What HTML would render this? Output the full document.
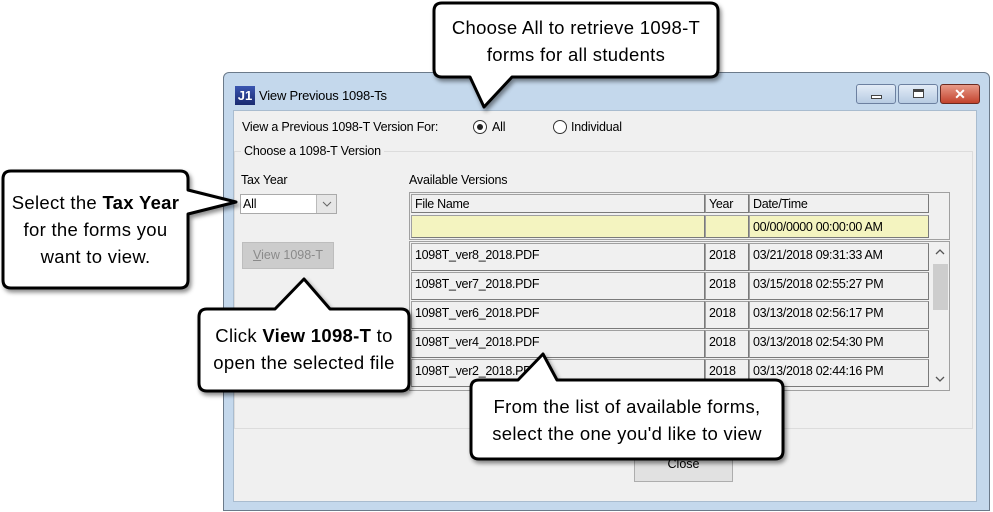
<!DOCTYPE html>
<html><head><meta charset="utf-8"><style>
*{margin:0;padding:0;box-sizing:border-box}
body{width:993px;height:512px;background:#fff;position:relative;overflow:hidden;font-family:"Liberation Sans",sans-serif;font-size:12px;color:#000}
.a{position:absolute}
.win{left:223px;top:72px;width:767px;height:439px;background:#c4d8ec;border:1px solid #6b7a8a;border-radius:6px 6px 0 0}
.client{left:233px;top:110px;width:744px;height:392px;background:#f0f0f0;border:1px solid #a9bccf}
.t{white-space:nowrap;font-size:12.5px;letter-spacing:-0.2px}
.cell{position:absolute;background:#f0f0f0;border:1px solid #a0a0a0;border-right-color:#7a7a7a;border-bottom-color:#7a7a7a;padding:2px 3px;font-size:12.5px;letter-spacing:-0.3px;white-space:nowrap;line-height:14px}
.co{font-family:"Liberation Sans",sans-serif;font-size:18.5px;letter-spacing:0.3px;text-align:center;line-height:27px;color:#000;white-space:nowrap}
</style></head><body>
<div class="a win"></div>
<div class="a" style="left:235px;top:86px;width:20px;height:19px;background:linear-gradient(#3a55b0,#1a2a70);color:#fff;font-weight:bold;font-size:13px;line-height:19px;text-align:center">J1</div>
<div class="a t" style="left:259px;top:88px;font-size:13px">View Previous 1098-Ts</div>
<div class="a" style="left:856px;top:84px;width:40px;height:20px;border:1px solid #6c80a0;border-radius:3px;background:linear-gradient(#e3ecf7,#b7cbe2)"><div class="a" style="left:14px;top:10px;width:11px;height:4px;background:#fff;border:1px solid #444"></div></div>
<div class="a" style="left:898px;top:84px;width:40px;height:20px;border:1px solid #6c80a0;border-radius:3px;background:linear-gradient(#e3ecf7,#b7cbe2)"><div class="a" style="left:14px;top:4px;width:11px;height:9px;background:#fff;border:1px solid #444;border-top-width:3px"></div></div>
<div class="a" style="left:940px;top:84px;width:40px;height:20px;border:1px solid #6b2a20;border-radius:3px;background:linear-gradient(#e89a88,#c2432d);color:#fff;font-weight:bold;font-size:14px;text-align:center;line-height:18px">✕</div>
<div class="a client"></div>
<div class="a t" style="left:242px;top:120px">View a Previous 1098-T Version For:</div>
<div class="a" style="left:473px;top:120px;width:14px;height:14px;border:1px solid #333;border-radius:50%;background:#fff"><div class="a" style="left:3px;top:3px;width:6px;height:6px;border-radius:50%;background:#222"></div></div>
<div class="a t" style="left:492px;top:120px">All</div>
<div class="a" style="left:553px;top:120px;width:14px;height:14px;border:1px solid #333;border-radius:50%;background:#fff"></div>
<div class="a t" style="left:571px;top:120px">Individual</div>
<div class="a" style="left:234px;top:151px;width:739px;height:278px;border:1px solid #dcdcdc"></div>
<div class="a t" style="left:241px;top:144px;background:#f0f0f0;padding:0 3px">Choose a 1098-T Version</div>
<div class="a t" style="left:241px;top:173px">Tax Year</div>
<div class="a" style="left:240px;top:194px;width:97px;height:20px;background:#fff;border:1px solid #aaa"><span class="a t" style="left:2px;top:2px">All</span><div class="a" style="right:0;top:0;width:20px;height:18px;background:#e6e6e6;border-left:1px solid #bbb"><svg class="a" style="left:5px;top:6px" width="10" height="6"><path d="M1 1 L5 5 L9 1" fill="none" stroke="#666" stroke-width="1"/></svg></div></div>
<div class="a" style="left:242px;top:242px;width:92px;height:27px;background:#ccc;border:1px solid #bdbdbd;color:#8a8a8a;text-align:center;line-height:25px;font-size:12.5px"><u>V</u>iew 1098-T</div>
<div class="a t" style="left:409px;top:173px">Available Versions</div>
<div class="a" style="left:409px;top:192px;width:541px;height:48px;border:1px solid #a0a0a0;background:#f0f0f0"></div>
<div class="cell" style="left:411px;top:194px;width:294px;height:19px">File Name</div>
<div class="cell" style="left:705px;top:194px;width:44px;height:19px">Year</div>
<div class="cell" style="left:749px;top:194px;width:180px;height:19px">Date/Time</div>
<div class="cell" style="left:411px;top:215px;width:294px;height:23px;background:#f4f4c0"></div>
<div class="cell" style="left:705px;top:215px;width:44px;height:23px;background:#f4f4c0"></div>
<div class="cell" style="left:749px;top:215px;width:180px;height:23px;background:#f4f4c0;padding-top:4px">00/00/0000 00:00:00 AM</div>
<div class="a" style="left:409px;top:241px;width:541px;height:150px;border:1px solid #a0a0a0;background:#f0f0f0"></div>
<div class="cell" style="left:411px;top:243px;width:294px;height:28px;padding-top:4px">1098T_ver8_2018.PDF</div><div class="cell" style="left:705px;top:243px;width:44px;height:28px;padding-top:4px">2018</div><div class="cell" style="left:749px;top:243px;width:180px;height:28px;padding-top:4px">03/21/2018 09:31:33 AM</div>
<div class="cell" style="left:411px;top:272px;width:294px;height:28px;padding-top:4px">1098T_ver7_2018.PDF</div><div class="cell" style="left:705px;top:272px;width:44px;height:28px;padding-top:4px">2018</div><div class="cell" style="left:749px;top:272px;width:180px;height:28px;padding-top:4px">03/15/2018 02:55:27 PM</div>
<div class="cell" style="left:411px;top:301px;width:294px;height:28px;padding-top:4px">1098T_ver6_2018.PDF</div><div class="cell" style="left:705px;top:301px;width:44px;height:28px;padding-top:4px">2018</div><div class="cell" style="left:749px;top:301px;width:180px;height:28px;padding-top:4px">03/13/2018 02:56:17 PM</div>
<div class="cell" style="left:411px;top:330px;width:294px;height:28px;padding-top:4px">1098T_ver4_2018.PDF</div><div class="cell" style="left:705px;top:330px;width:44px;height:28px;padding-top:4px">2018</div><div class="cell" style="left:749px;top:330px;width:180px;height:28px;padding-top:4px">03/13/2018 02:54:30 PM</div>
<div class="cell" style="left:411px;top:359px;width:294px;height:28px;padding-top:4px">1098T_ver2_2018.PDF</div><div class="cell" style="left:705px;top:359px;width:44px;height:28px;padding-top:4px">2018</div><div class="cell" style="left:749px;top:359px;width:180px;height:28px;padding-top:4px">03/13/2018 02:44:16 PM</div>
<div class="a" style="left:931px;top:242px;width:18px;height:148px;background:#f0f0f0"></div>
<svg class="a" style="left:935px;top:249px" width="10" height="6"><path d="M1 5 L5 1 L9 5" fill="none" stroke="#555" stroke-width="1.3"/></svg>
<div class="a" style="left:933px;top:264px;width:15px;height:46px;background:#cdcdcd"></div>
<svg class="a" style="left:935px;top:376px" width="10" height="6"><path d="M1 1 L5 5 L9 1" fill="none" stroke="#555" stroke-width="1.3"/></svg>
<div class="a" style="left:634px;top:446px;width:99px;height:36px;background:#e1e1e1;border:1px solid #adadad;text-align:center;line-height:34px;font-size:12.5px">Close</div>
<svg class="a" style="left:0;top:0" width="993" height="512">
<defs><filter id="s" x="-10%" y="-10%" width="130%" height="130%"><feDropShadow dx="2" dy="3" stdDeviation="2" flood-opacity="0.45"/></filter></defs>
<g fill="#fff" stroke="#000" stroke-width="3" stroke-linejoin="round" filter="url(#s)">
<path d="M442 3 H710 Q718 3 718 11 V69 Q718 77 710 77 H512 L484 107 L470 77 H442 Q434 77 434 69 V11 Q434 3 442 3 Z"/>
<path d="M11 171 H180 Q188 171 188 179 V190 L236 202 L188 214 V280 Q188 288 180 288 H11 Q3 288 3 280 V179 Q3 171 11 171 Z"/>
<path d="M207 309 H275 L304 279 L330 309 H401 Q409 309 409 317 V383 Q409 391 401 391 H207 Q199 391 199 383 V317 Q199 309 207 309 Z"/>
<path d="M479 380 H518 L543 354 L557 380 H775 Q783 380 783 388 V451 Q783 459 775 459 H479 Q471 459 471 451 V388 Q471 380 479 380 Z"/>
</g></svg>
<div class="a co" style="left:434px;top:14px;width:284px">Choose All to retrieve 1098-T<br>forms for all students</div>
<div class="a co" style="left:3px;top:189px;width:185px">Select the <b>Tax Year</b><br>for the forms you<br>want to view.</div>
<div class="a co" style="left:199px;top:322px;width:210px">Click <b>View 1098-T</b> to<br>open the selected file</div>
<div class="a co" style="left:471px;top:393px;width:312px">From the list of available forms,<br>select the one you'd like to view</div>
</body></html>
